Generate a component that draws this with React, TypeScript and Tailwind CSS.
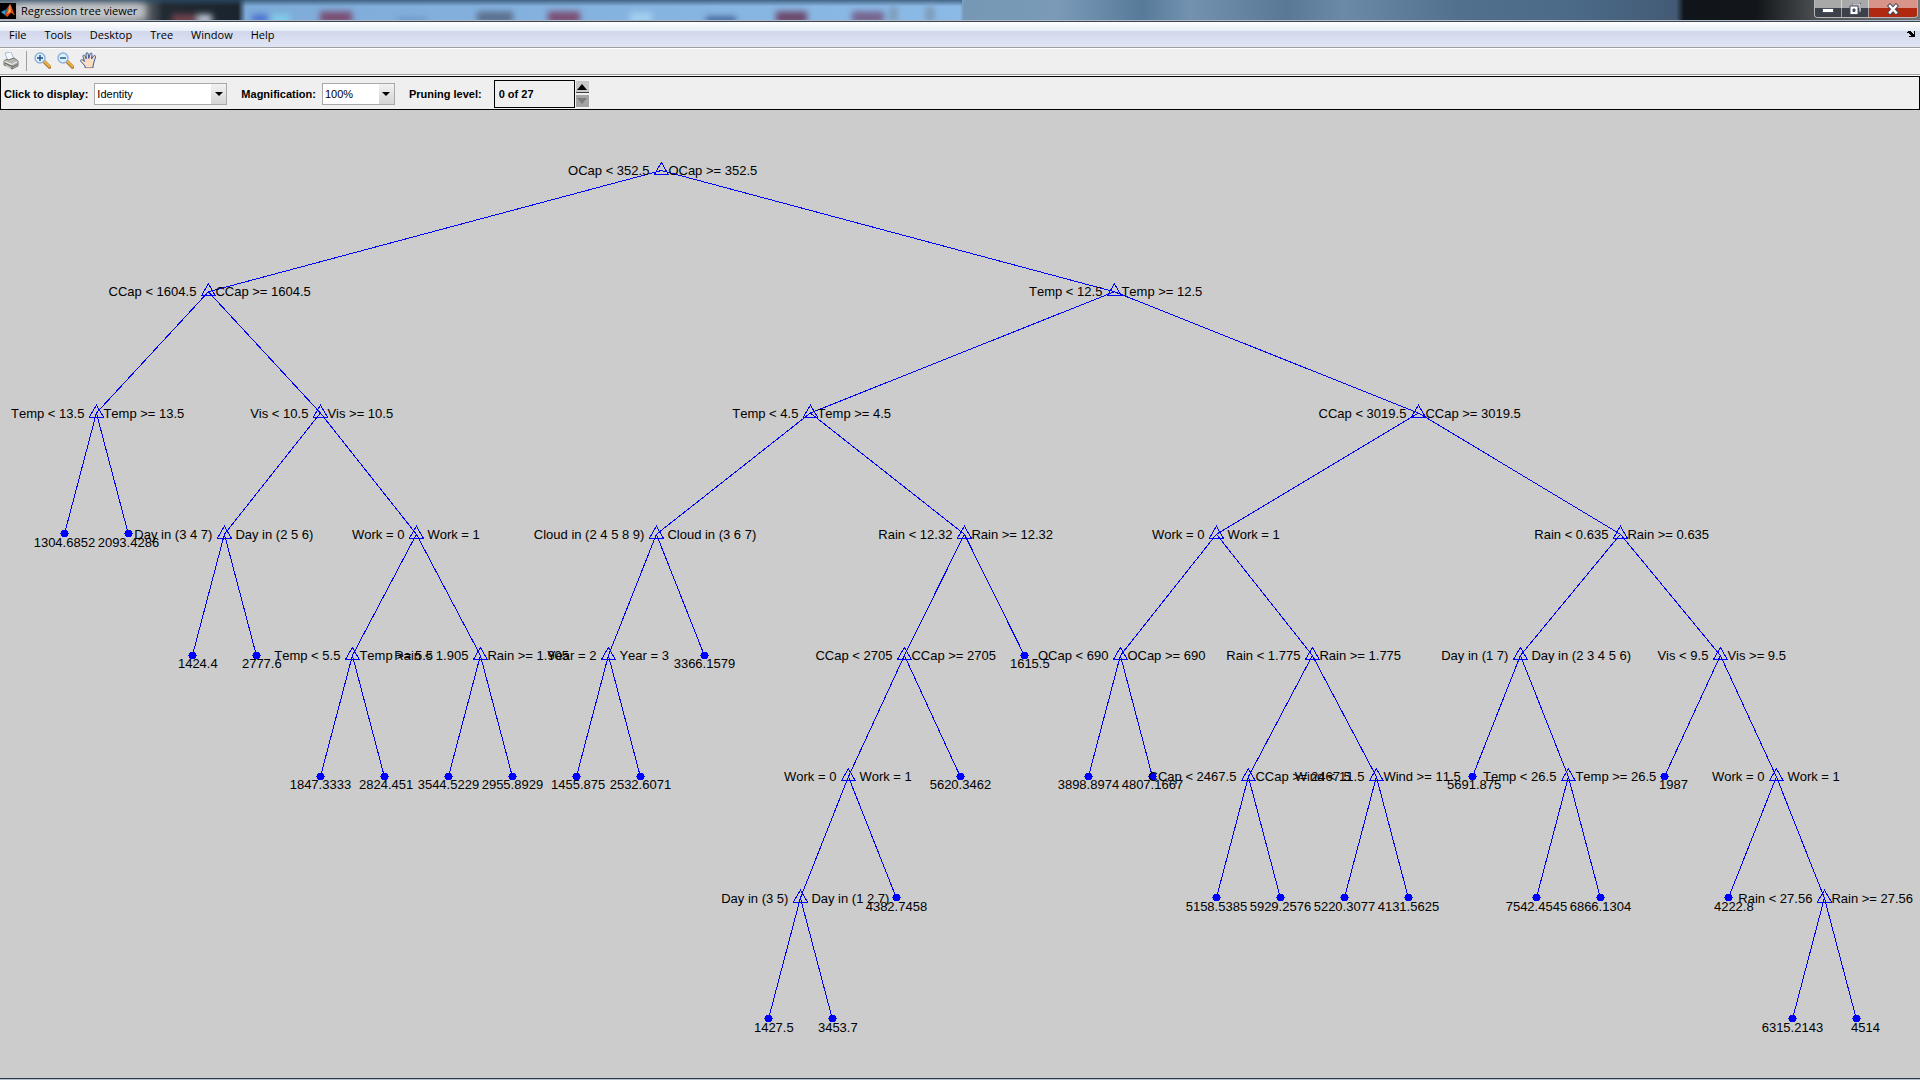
import React from "react";

type Branch = { left: string; right: string; categorical?: boolean; children: [TreeNode, TreeNode] };
type TreeNode = string | Branch;

const cut = (name: string, value: string, a: TreeNode, b: TreeNode): Branch => ({
  left: `${name} < ${value}`,
  right: `${name} >= ${value}`,
  children: [a, b],
});
const choice = (left: string, right: string, a: TreeNode, b: TreeNode): Branch => ({
  left,
  right,
  categorical: true,
  children: [a, b],
});

const tree: TreeNode = cut(
  "OCap",
  "352.5",
  cut(
    "CCap",
    "1604.5",
    cut("Temp", "13.5", "1304.6852", "2093.4286"),
    cut(
      "Vis",
      "10.5",
      choice("Day in (3 4 7)", "Day in (2 5 6)", "1424.4", "2777.6"),
      choice(
        "Work = 0",
        "Work = 1",
        cut("Temp", "5.5", "1847.3333", "2824.451"),
        cut("Rain", "1.905", "3544.5229", "2955.8929"),
      ),
    ),
  ),
  cut(
    "Temp",
    "12.5",
    cut(
      "Temp",
      "4.5",
      choice(
        "Cloud in (2 4 5 8 9)",
        "Cloud in (3 6 7)",
        choice("Year = 2", "Year = 3", "1455.875", "2532.6071"),
        "3366.1579",
      ),
      cut(
        "Rain",
        "12.32",
        cut(
          "CCap",
          "2705",
          choice(
            "Work = 0",
            "Work = 1",
            choice("Day in (3 5)", "Day in (1 2 7)", "1427.5", "3453.7"),
            "4382.7458",
          ),
          "5620.3462",
        ),
        "1615.5",
      ),
    ),
    cut(
      "CCap",
      "3019.5",
      choice(
        "Work = 0",
        "Work = 1",
        cut("OCap", "690", "3898.8974", "4807.1667"),
        cut(
          "Rain",
          "1.775",
          cut("CCap", "2467.5", "5158.5385", "5929.2576"),
          cut("Wind", "11.5", "5220.3077", "4131.5625"),
        ),
      ),
      cut(
        "Rain",
        "0.635",
        choice(
          "Day in (1 7)",
          "Day in (2 3 4 5 6)",
          "5691.875",
          cut("Temp", "26.5", "7542.4545", "6866.1304"),
        ),
        cut(
          "Vis",
          "9.5",
          "1987",
          choice("Work = 0", "Work = 1", "4222.8", cut("Rain", "27.56", "6315.2143", "4514")),
        ),
      ),
    ),
  ),
);

const LEAF_STEP = 64;
const LEVEL_STEP = 121.25;
const TOP = 60.5;

type Placed = { x: number; y: number; node: TreeNode };
type Edge = { x1: number; y1: number; x2: number; y2: number };

function place(root: TreeNode) {
  const nodes: Placed[] = [];
  const edges: Edge[] = [];
  let leaves = 0;
  const walk = (node: TreeNode, depth: number): Placed => {
    const y = TOP + depth * LEVEL_STEP;
    if (typeof node === "string") {
      leaves += 1;
      const leaf = { x: leaves * LEAF_STEP + 0.4, y, node };
      nodes.push(leaf);
      return leaf;
    }
    const a = walk(node.children[0], depth + 1);
    const b = walk(node.children[1], depth + 1);
    const me = { x: (a.x + b.x) / 2, y, node };
    for (const c of [a, b]) edges.push({ x1: me.x, y1: y, x2: c.x, y2: c.y });
    nodes.push(me);
    return me;
  };
  walk(root, 0);
  return { nodes, edges };
}

const plot = place(tree);

function TreePlot() {
  return (
    <svg
      viewBox="0 0 1920 968"
      className="block h-auto w-full bg-[#cccccc]"
      role="img"
      aria-label="Regression tree"
    >
      <g stroke="#0000ff" strokeWidth="1" fill="none" shapeRendering="crispEdges">
        {plot.edges.map((e, i) => (
          <line key={i} {...e} />
        ))}
        {plot.nodes.map(({ x, y, node }, i) =>
          typeof node === "string" ? (
            <path
              key={i}
              fill="#0000ff"
              stroke="none"
              d={`M${Math.floor(x) - 2} ${Math.round(y) - 4}h5v1h1v2h1v1h-1v2h-1v1h-5v-1h-1v-2h-1v-1h1v-2h1z`}
            />
          ) : (
            <path key={i} d={`M${x} ${y - 8}L${x + 7} ${y + 4}H${x - 7}Z`} />
          ),
        )}
      </g>
      <g className="fill-black font-['Liberation_Sans',Arial,sans-serif] text-[13px] [font-kerning:none]">
        {plot.nodes.map(({ x, y, node }, i) =>
          typeof node === "string" ? (
            <text key={i} x={x} y={Math.round(y + 12.5)} textAnchor="middle" className="whitespace-pre">
              {node.padStart(9)}
            </text>
          ) : (
            <g key={i}>
              <text x={x - 12} y={Math.round(y + 4.5)} textAnchor="end">
                {node.left}
              </text>
              <text x={x + (node.categorical ? 11 : 7)} y={Math.round(y + 4.5)}>
                {node.right}
              </text>
            </g>
          ),
        )}
      </g>
    </svg>
  );
}

function GlassBackdrop() {
  const smudges: [number, number, number, string][] = [
    [172, 26, 14, "#7c4450"],
    [198, 14, 14, "#c9d4e4"],
    [252, 16, 14, "#4a6fd0"],
    [272, 18, 14, "#7fd0ec"],
    [320, 32, 11, "#7a4c70"],
    [397, 30, 17, "#6c94c4"],
    [477, 36, 11, "#5c708c"],
    [548, 32, 11, "#7a4c70"],
    [630, 22, 12, "#a4d0f0"],
    [706, 30, 16, "#3c5c90"],
    [776, 31, 11, "#6c4468"],
    [852, 32, 11, "#76628c"],
    [890, 7, 6, "#7c98b4"],
    [926, 8, 6, "#7c98b4"],
  ];
  return (
    <svg
      viewBox="0 0 1920 20"
      preserveAspectRatio="none"
      className="absolute inset-0 h-full w-full"
      aria-hidden="true"
    >
      <defs>
        <linearGradient id="glass" x1="0" x2="1">
          <stop offset="0" stopColor="#a9adb2" />
          <stop offset="0.07" stopColor="#8c9094" />
          <stop offset="0.085" stopColor="#222a32" />
          <stop offset="0.124" stopColor="#1b242e" />
          <stop offset="0.128" stopColor="#7eabd8" />
          <stop offset="0.5" stopColor="#8cbae6" />
          <stop offset="0.502" stopColor="#7698b4" />
          <stop offset="0.55" stopColor="#7a9ab8" />
          <stop offset="0.595" stopColor="#587a9a" />
          <stop offset="0.62" stopColor="#7292b0" />
          <stop offset="0.67" stopColor="#587896" />
          <stop offset="0.7" stopColor="#6a8aa8" />
          <stop offset="0.76" stopColor="#50708e" />
          <stop offset="0.82" stopColor="#4a6a88" />
          <stop offset="0.873" stopColor="#445a74" />
          <stop offset="0.877" stopColor="#10151a" />
          <stop offset="0.915" stopColor="#12161a" />
          <stop offset="0.945" stopColor="#4a4e50" />
          <stop offset="1" stopColor="#707476" />
        </linearGradient>
        <linearGradient id="shade" x2="0" y2="1">
          <stop offset="0" stopColor="#2c4a66" stopOpacity="0.75" />
          <stop offset="0.3" stopColor="#2c4a66" stopOpacity="0" />
        </linearGradient>
        <filter id="soft" x="-20%" y="-80%" width="140%" height="260%">
          <feGaussianBlur stdDeviation="3" />
        </filter>
      </defs>
      <rect width="1920" height="20" fill="url(#glass)" />
      <rect width="962" height="20" fill="url(#shade)" />
      <g filter="url(#soft)">
        {smudges.map(([x, w, y, fill]) => (
          <rect key={x} x={x} y={y} width={w} height={22 - y} fill={fill} />
        ))}
      </g>
      <rect x="18" y="4" width="128" height="14" fill="#d2d4d6" opacity="0.75" filter="url(#soft)" />
    </svg>
  );
}

function MatlabLogo() {
  return (
    <svg viewBox="0 0 16 16" className="h-4 w-4 shrink-0" aria-hidden="true">
      <rect width="16" height="16" fill="#000" />
      <path d="M1 9l4-2 2 2-2 3z" fill="#3f9bd8" />
      <path d="M5 7c2-1 3-4 5-6L8 8l-3 4z" fill="#2a6a9c" />
      <path d="M10 1c-2 3-3 8-5 11l2 2c2-1 2-3 4-4 1 0 2 2 4 2-2-3-3-9-5-11z" fill="#d8481c" />
      <path d="M10 1c-1 3-1 6-3 10 2-1 3-2 4-2z" fill="#f7a63a" />
    </svg>
  );
}

function PrinterIcon() {
  return (
    <svg viewBox="0 0 16 18" className="h-[18px] w-4" aria-hidden="true">
      <path d="M2 1l6-1 3 7-6 2z" fill="#f4f9ff" stroke="#9db2c8" strokeWidth=".8" />
      <path d="M1 9l3-2 1 1 6-2 4 3v5l-6 3-8-4z" fill="#b4b4b0" stroke="#686864" strokeWidth=".9" />
      <path d="M1.500 9.500L9 12.500l5.500-3" fill="none" stroke="#f4f4f0" />
      <path d="M9 13v4M2 11l6 3M10 14.500l4-2" stroke="#5c5c58" fill="none" />
      <path d="M3 14l5 2.500" stroke="#e8e8e4" />
    </svg>
  );
}

function ZoomIcon({ plus }: { plus?: boolean }) {
  return (
    <svg viewBox="0 0 17 17" className="h-[17px] w-[17px]" aria-hidden="true">
      <path d="M10 9.500l5.500 5.500" stroke="#a87830" strokeWidth="3.600" strokeLinecap="round" />
      <path d="M10.500 9.500l5 5" stroke="#f4b040" strokeWidth="2" strokeLinecap="round" />
      <circle cx="6" cy="6" r="5" fill="#d8f2fb" stroke="#8fb0dc" strokeWidth="1.400" />
      <path d={plus ? "M3 6h6M6 3v6" : "M3 6h6"} stroke="#204c84" strokeWidth="1.400" />
    </svg>
  );
}

function HandIcon() {
  return (
    <svg viewBox="0 0 17 17" className="h-[17px] w-[17px]" aria-hidden="true">
      <path
        d="M5 16v-2L1 9.500C0 8 1.500 7 3 8.200L4.500 9.500 3 4.500c-.4-1.600 1.500-2 2-.5l1.300 3L6 2c0-1.800 2-1.800 2.200 0L8.800 6.500 10 2c.4-1.500 2.200-1.200 2 .4L11.500 7l2-3c.9-1.300 2.500-.4 2 1L14 10l-1 4v2z"
        fill="#fbdcc0"
        stroke="#3c5c9c"
        strokeWidth="1"
      />
      <path d="M5 16.500h8" stroke="#fbdcc0" />
    </svg>
  );
}

const captionButton =
  "flex h-[17px] items-center justify-center border-r border-white/50 last:border-r-0";

function TitleBar() {
  return (
    <header className="relative h-[22px] border-b border-[#3a4450]">
      <GlassBackdrop />
      <div className="relative flex h-[21px] justify-between border-b border-[#b4bccc] pr-0.5">
        <div className="flex items-center gap-[5px] pt-0.5">
          <MatlabLogo />
          <h1 className="font-['Open_Sans','Noto_Sans',sans-serif] text-[11px] leading-4 text-black">
            Regression tree viewer
          </h1>
        </div>
        <div className="flex h-[18px] overflow-hidden rounded-b-[4px] border border-t-0 border-[#b8b8b8]">
          <button
            aria-label="Minimize"
            className={`${captionButton} w-[27px] bg-linear-to-b from-[#a8a8a8] from-45% to-[#3c4048] to-50%`}
          >
            <svg viewBox="0 0 12 6" className="mt-1 h-1.5 w-3">
              <rect x=".5" y=".5" width="11" height="4" fill="#fff" stroke="#4a5060" />
            </svg>
          </button>
          <button
            aria-label="Restore"
            className={`${captionButton} w-[27px] bg-linear-to-b from-[#a8a8a8] from-45% to-[#3c4048] to-50%`}
          >
            <svg viewBox="0 0 12 12" className="h-3 w-3">
              <path d="M3 .5h8.500V9H9.500" fill="none" stroke="#4a5060" strokeWidth="2" />
              <path d="M3.500 1h7.500v7.500" fill="none" stroke="#fff" />
              <path d="M1 3h8v8.500H1z" fill="#fff" stroke="#4a5060" />
              <path d="M4 6h2v2.500H4z" fill="#444a58" stroke="#4a5060" />
            </svg>
          </button>
          <button
            aria-label="Close"
            className={`${captionButton} w-12 bg-linear-to-b from-[#d89488] from-45% to-[#b02810] to-50%`}
          >
            <svg viewBox="0 0 12 12" className="h-3 w-3">
              <path d="M3 3l6 6.500M9 3L3 9.500" stroke="#4a4a5c" strokeWidth="4.400" strokeLinecap="square" />
              <path d="M3 3l6 6.500M9 3L3 9.500" stroke="#fff" strokeWidth="2.400" strokeLinecap="square" />
            </svg>
          </button>
        </div>
      </div>
    </header>
  );
}

function MenuBar() {
  return (
    <nav className="flex h-[26px] items-center justify-between border-b border-[#a0a0a0] bg-[linear-gradient(#ffffff,#e6edf5_36%,#d2d8eb_38%,#e0e5f6)] pr-[5px]">
      <ul className="flex font-['Open_Sans','Noto_Sans',sans-serif] text-[11px] leading-4 text-black">
        {["File", "Tools", "Desktop", "Tree", "Window", "Help"].map((item) => (
          <li key={item}>
            <button className="px-[9px]">{item}</button>
          </li>
        ))}
      </ul>
      <button aria-label="Dock figure" className="mb-0.5">
        <svg viewBox="0 0 8 6" className="h-1.5 w-2" shapeRendering="crispEdges">
          <path d="M0 1h1V0h3v1h1v1h1v1h1V0h1v6H2V5h2V4H3V3H2V2H1v0H0z" fill="#000" />
        </svg>
      </button>
    </nav>
  );
}

function ToolBar() {
  return (
    <div
      role="toolbar"
      aria-label="Figure tools"
      className="flex h-[27px] items-center border-t border-b border-t-white border-b-[#a0a0a0] bg-[#efefef] pb-0.5 pl-[3px]"
    >
      <button aria-label="Print">
        <PrinterIcon />
      </button>
      <span className="mx-[7px] h-5 w-px bg-[#a0a0a0]" />
      <div className="flex items-center gap-1.5">
        <button aria-label="Zoom in">
          <ZoomIcon plus />
        </button>
        <button aria-label="Zoom out">
          <ZoomIcon />
        </button>
        <button aria-label="Pan">
          <HandIcon />
        </button>
      </div>
    </div>
  );
}

function Picker({
  id,
  label,
  options,
  width,
}: {
  id: string;
  label: string;
  options: string[];
  width: string;
}) {
  return (
    <div className="flex items-center gap-1.5">
      <label htmlFor={id}>{label}</label>
      <div className={`relative h-[22px] ${width}`}>
        <select
          id={id}
          className="h-full w-full appearance-none border border-[#a9a9a9] bg-white pl-0.5 text-[11px] font-normal text-black"
        >
          {options.map((o) => (
            <option key={o}>{o}</option>
          ))}
        </select>
        <span className="pointer-events-none absolute inset-y-px right-px flex w-[15px] items-center justify-center bg-linear-to-b from-[#f2f2f2] to-[#d4d4d4]">
          <svg viewBox="0 0 8 4" className="h-1 w-2" aria-hidden="true">
            <path d="M0 0h8L4 4z" fill="#000" />
          </svg>
        </span>
      </div>
    </div>
  );
}

function ControlPanel() {
  return (
    <form className="mt-px flex h-[34px] items-center gap-3.5 border border-black bg-[#efefef] pt-0.5 pl-[3px] font-['Liberation_Sans',Arial,sans-serif] text-[11px] font-bold text-black">
      <Picker
        id="display"
        label="Click to display:"
        options={["Identity", "Variable ranges", "Node statistics"]}
        width="w-[133px]"
      />
      <Picker id="magnification" label="Magnification:" options={["100%", "200%", "400%"]} width="w-[73px]" />
      <div className="flex items-center">
        <label htmlFor="pruning">Pruning level:</label>
        <input
          id="pruning"
          readOnly
          defaultValue="0 of 27"
          className="ml-3 h-7 w-[81px] border border-black bg-[#efefef] pl-1 text-[11px] font-bold"
        />
        <div className="flex flex-col gap-0.5 pl-px">
          <button
            type="button"
            aria-label="Increase pruning level"
            className="flex h-3 w-[13px] items-center justify-center border-b border-[#404040] bg-[#c8c8c8]"
          >
            <svg viewBox="0 0 10 6" className="h-1.5 w-2.5">
              <path d="M0 6h10L5 0z" fill="#000" />
            </svg>
          </button>
          <button
            type="button"
            disabled
            aria-label="Decrease pruning level"
            className="flex h-3 w-[13px] items-center justify-center bg-[#a4a4a4]"
          >
            <svg viewBox="0 0 10 6" className="h-1.5 w-2.5">
              <path d="M0 0h10L5 6z" fill="#7c7c7c" />
            </svg>
          </button>
        </div>
      </div>
    </form>
  );
}

export default function App() {
  return (
    <div className="flex min-h-screen flex-col bg-[#cccccc]">
      <TitleBar />
      <MenuBar />
      <ToolBar />
      <div className="bg-white">
        <ControlPanel />
      </div>
      <main className="grow">
        <TreePlot />
      </main>
      <footer className="h-0.5 border-t border-[#2c3848] bg-[#b4c0cc]" />
    </div>
  );
}
